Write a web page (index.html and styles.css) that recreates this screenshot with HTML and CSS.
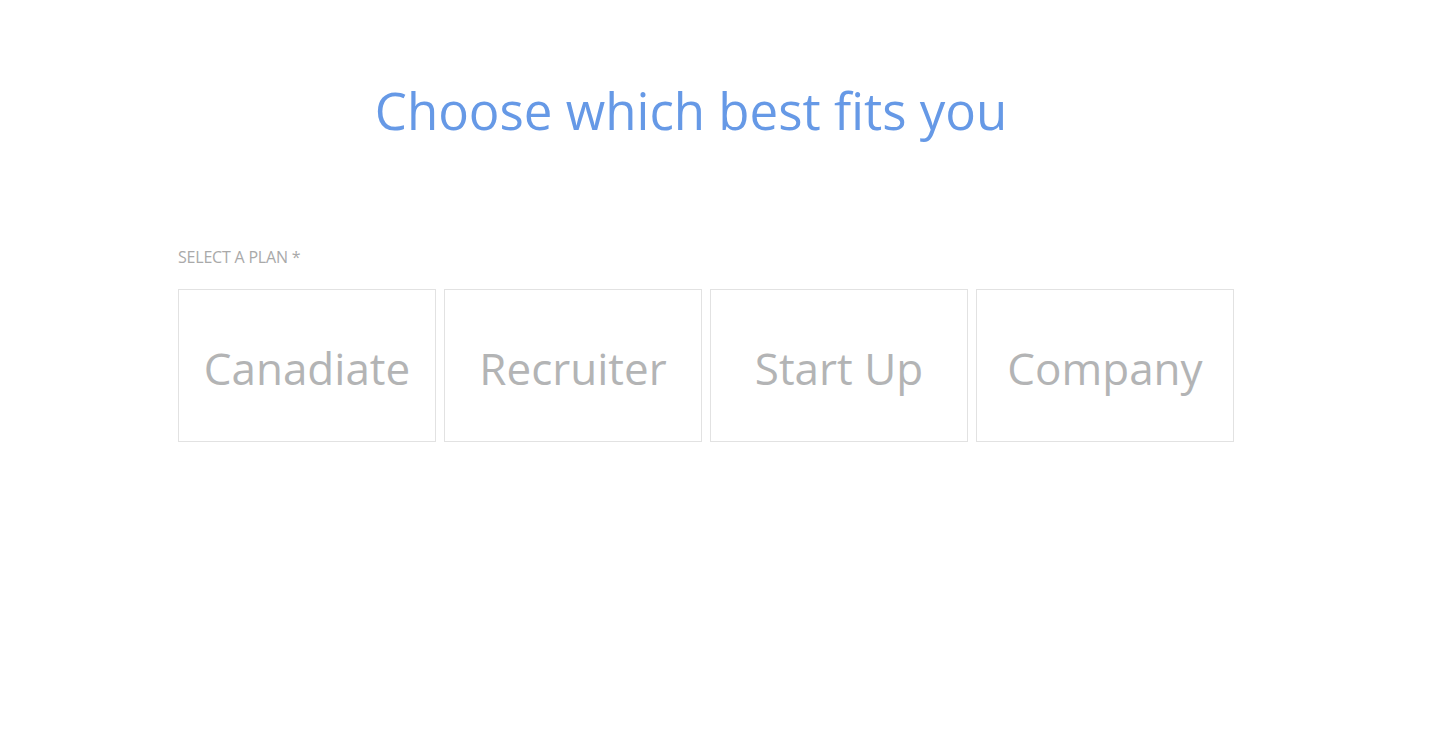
FILE: index.html
```html
<!DOCTYPE html>
<html>
<head>
<meta charset="utf-8">
<link rel="stylesheet" href="styles.css">
</head>
<body>
<main class="page">
  <h1 class="title">Choose which best fits you</h1>
  <section class="plan">
    <div class="plan-label">SELECT A PLAN *</div>
    <div class="plan-grid">
      <div class="plan-card">Canadiate</div>
      <div class="plan-card">Recruiter</div>
      <div class="plan-card">Start Up</div>
      <div class="plan-card">Company</div>
    </div>
  </section>
</main>
</body>
</html>
```
FILE: styles.css
```css
html, body {
  margin: 0;
  padding: 0;
  background: #ffffff;
}
body {
  font-family: "Open Sans", "Noto Sans", sans-serif;
}
.page {
  width: 1056px;
  margin: 0 0 0 178px;
  padding-top: 76px;
}
.title {
  margin: 0;
  text-align: center;
  font-weight: 400;
  font-size: 51px;
  line-height: 68px;
  color: #6699e6;
  padding-right: 30px;
}
.plan {
  margin-top: 103px;
}
.plan-label {
  font-size: 16px;
  line-height: 20px;
  color: #a9a9a9;
  letter-spacing: -0.2px;
}
.plan-grid {
  margin-top: 22px;
  display: grid;
  grid-template-columns: repeat(4, 258px);
  gap: 8px;
}
.plan-card {
  height: 153px;
  border: 1px solid #e2e2e2;
  display: flex;
  align-items: center;
  justify-content: center;
  font-size: 44px;
  color: #b3b4b5;
  padding-top: 4px;
  box-sizing: border-box;
}
```
